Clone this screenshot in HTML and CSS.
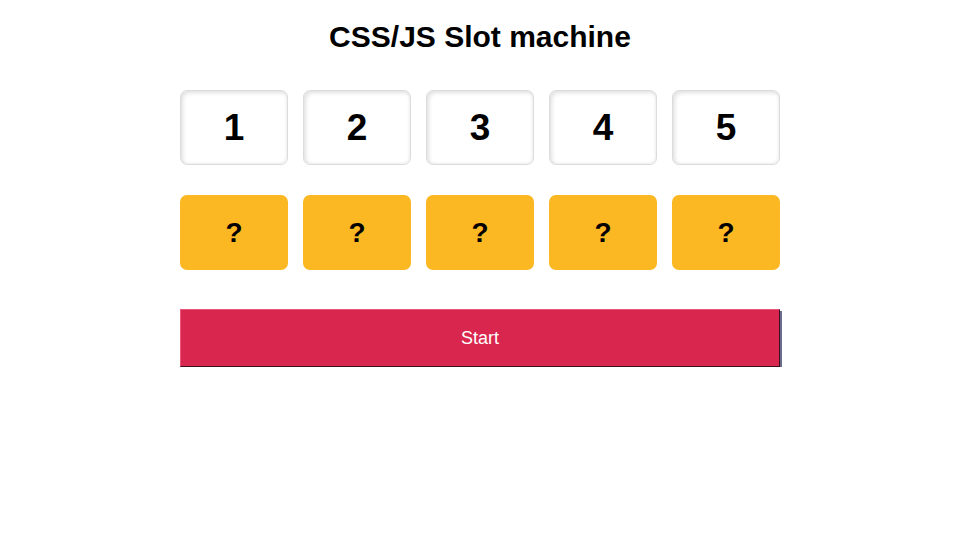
FILE: index.html
```html
<!DOCTYPE html>
<html lang="en">
<head>
    <meta charset="UTF-8">
    <meta name="viewport" content="width=device-width, initial-scale=1.0">
    <title>CSS/JS Slot machine</title>
    <link rel="stylesheet" href="styles.css">
</head>
<body>
    <div class="container">
        <h1>CSS/JS Slot machine</h1>

        <div class="row">
            <div class="slot">1</div>
            <div class="slot">2</div>
            <div class="slot">3</div>
            <div class="slot">4</div>
            <div class="slot">5</div>
        </div>

        <div class="row">
            <div class="result">?</div>
            <div class="result">?</div>
            <div class="result">?</div>
            <div class="result">?</div>
            <div class="result">?</div>
        </div>

        <button class="start">Start</button>
    </div>
</body>
</html>
```

FILE: styles.css
```css
body {
    font-family: "Liberation Sans", Arial, sans-serif;
    margin: 0;
    padding: 0;
    background-color: #fff;
}
.container {
    width: 600px;
    margin: 0 auto;
    padding-top: 19px;
}
h1 {
    text-align: center;
    font-size: 30px;
    margin: 0 0 35px;
    line-height: 36px;
}
.row {
    display: flex;
    gap: 15px;
    margin-bottom: 30px;
}
.slot {
    width: 108px;
    height: 75px;
    box-sizing: border-box;
    border: 1px solid #dcdcdc;
    border-radius: 7px;
    background-color: #fff;
    box-shadow: inset 2px 2px 4px rgba(0, 0, 0, 0.12), inset -1px -1px 3px rgba(0, 0, 0, 0.06);
    display: flex;
    align-items: center;
    justify-content: center;
    font-size: 37px;
    font-weight: bold;
}
.result {
    width: 108px;
    height: 75px;
    border-radius: 7px;
    background-color: #fbb822;
    display: flex;
    align-items: center;
    justify-content: center;
    font-size: 28px;
    font-weight: bold;
}
.start {
    display: block;
    width: 600px;
    height: 58px;
    margin-top: 39px;
    box-sizing: border-box;
    background-color: #d9264e;
    border: 1px solid #e8577a;
    border-right-color: #3a1020;
    border-bottom-color: #3a1020;
    box-shadow: 2px 2px 0 #6a6d8c;
    color: #fff;
    font-family: "Liberation Sans", Arial, sans-serif;
    font-size: 18px;
    cursor: pointer;
}
```
